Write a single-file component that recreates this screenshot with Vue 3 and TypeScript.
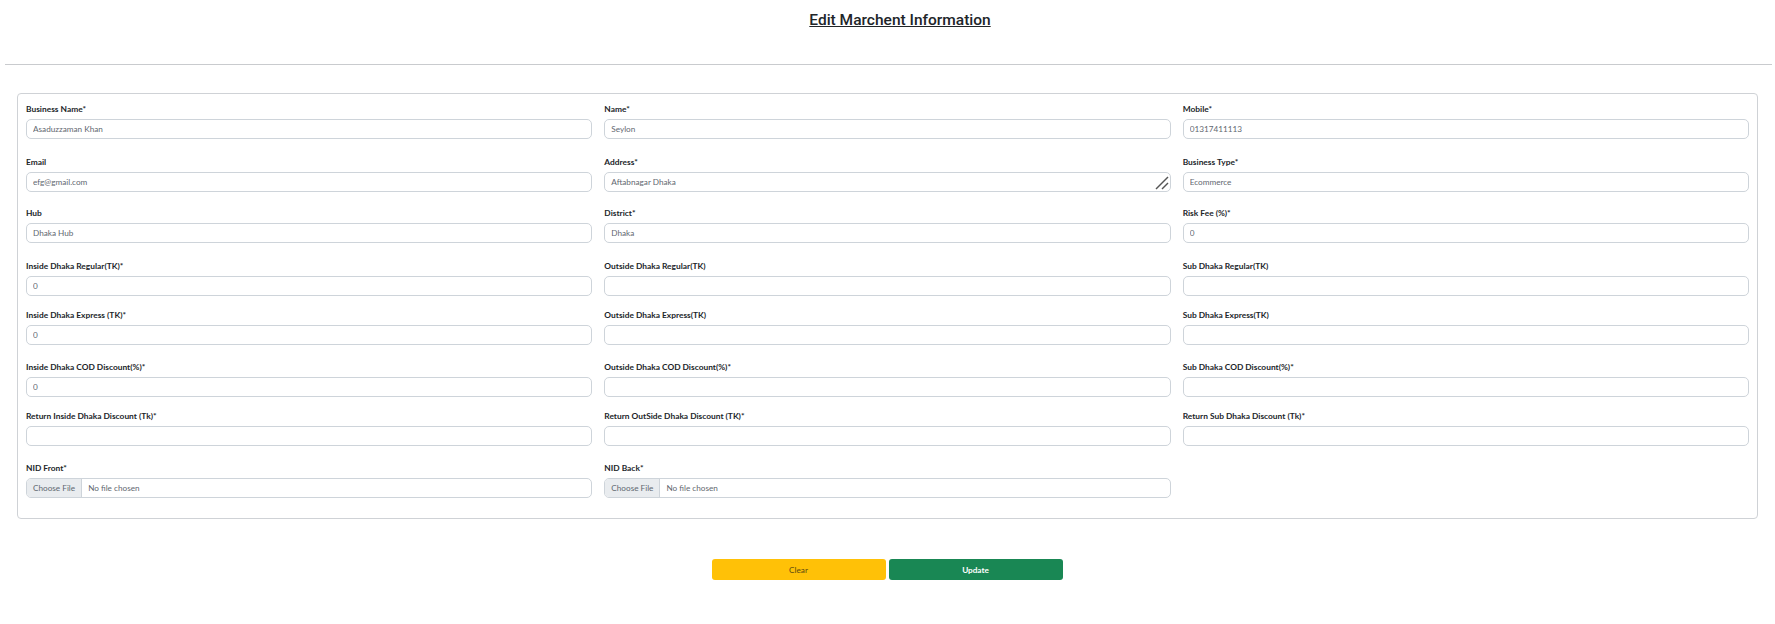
<script setup lang="ts">
interface Field {
  label: string;
  value?: string;
  type?: 'text' | 'textarea' | 'file';
}

const fields: Field[] = [
  { label: 'Business Name*', value: 'Asaduzzaman Khan' },
  { label: 'Name*', value: 'Seylon' },
  { label: 'Mobile*', value: '01317411113' },
  { label: 'Email', value: 'efg@gmail.com' },
  { label: 'Address*', value: 'Aftabnagar Dhaka', type: 'textarea' },
  { label: 'Business Type*', value: 'Ecommerce' },
  { label: 'Hub', value: 'Dhaka Hub' },
  { label: 'District*', value: 'Dhaka' },
  { label: 'Risk Fee (%)*', value: '0' },
  { label: 'Inside Dhaka Regular(TK)*', value: '0' },
  { label: 'Outside Dhaka Regular(TK)' },
  { label: 'Sub Dhaka Regular(TK)' },
  { label: 'Inside Dhaka Express (TK)*', value: '0' },
  { label: 'Outside Dhaka Express(TK)' },
  { label: 'Sub Dhaka Express(TK)' },
  { label: 'Inside Dhaka COD Discount(%)*', value: '0' },
  { label: 'Outside Dhaka COD Discount(%)*' },
  { label: 'Sub Dhaka COD Discount(%)*' },
  { label: 'Return Inside Dhaka Discount (Tk)*' },
  { label: 'Return OutSide Dhaka Discount (TK)*' },
  { label: 'Return Sub Dhaka Discount (Tk)*' },
  { label: 'NID Front*', type: 'file' },
  { label: 'NID Back*', type: 'file' },
];
</script>

<template>
  <main class="page">
    <h1 class="title">Edit Marchent Information</h1>
    <hr class="divider" />

    <form class="card" @submit.prevent>
      <div v-for="field in fields" :key="field.label" class="field">
        <label class="field__label">{{ field.label }}</label>

        <div v-if="field.type === 'file'" class="file">
          <span class="file__button">Choose File</span>
          <span class="file__name">No file chosen</span>
        </div>

        <div v-else-if="field.type === 'textarea'" class="area">
          <textarea class="control control--area" rows="1" readonly :value="field.value"></textarea>
          <svg class="area__grip" width="14" height="14" viewBox="0 0 14 14" aria-hidden="true">
            <path d="M1 13 L13 1" />
            <path d="M7 13 L13 7" />
          </svg>
        </div>

        <input v-else class="control" type="text" readonly :value="field.value ?? ''" />
      </div>
    </form>

    <div class="actions">
      <button class="btn btn--clear" type="button">Clear</button>
      <button class="btn btn--update" type="button">Update</button>
    </div>
  </main>
</template>

<style>
html,
body {
  margin: 0;
  background: #fff;
}
</style>

<style scoped>
.page {
  box-sizing: border-box;
  height: 624px;
  padding: 0 3px 0 5px;
  font-family: Lato, "Liberation Sans", sans-serif;
  color: #212529;
  background: #fff;
}

.title {
  margin: 0 0 0 23px;
  padding-top: 9px;
  height: 56px;
  box-sizing: border-box;
  text-align: center;
  font-family: Roboto, "Liberation Sans", sans-serif;
  font-size: 15.5px;
  line-height: 22px;
  font-weight: 500;
  text-decoration: underline;
}

.divider {
  margin: 0;
  border: 0;
  border-top: 1px solid #c9cbce;
  margin-top: 8px;
}

.card {
  box-sizing: border-box;
  display: grid;
  grid-template-columns: repeat(3, 1fr);
  grid-template-rows: 53px 51px 53px 49px 52px 49px 52px auto;
  column-gap: 12px;
  height: 426px;
  margin: 28px 14px 0 12px;
  padding: 9px 8px 0;
  border: 1px solid #cfd2d6;
  border-radius: 4px;
}

.field__label {
  display: block;
  height: 16px;
  font-size: 8.4px;
  line-height: 12px;
  font-weight: 700;
  color: #212529;
}

.control {
  display: block;
  box-sizing: border-box;
  width: 100%;
  height: 20px;
  padding: 0 6px;
  border: 1px solid #ced4da;
  border-radius: 5px;
  background: #fff;
  font-family: inherit;
  font-size: 8.2px;
  line-height: 18px;
  color: #5f6870;
  outline: none;
}

.control--area {
  resize: none;
  overflow: hidden;
}

.area {
  position: relative;
}

.area__grip {
  position: absolute;
  right: 2px;
  bottom: 2px;
  fill: none;
  stroke: #555;
  stroke-width: 1.4;
}

.file {
  display: flex;
  box-sizing: border-box;
  height: 20px;
  border: 1px solid #ced4da;
  border-radius: 5px;
  overflow: hidden;
  font-size: 8.2px;
  line-height: 18px;
  color: #5f6870;
}

.file__button {
  padding: 0 6px;
  background: #e9ecef;
  border-right: 1px solid #ced4da;
}

.file__name {
  padding: 0 6px;
}

.actions {
  display: flex;
  justify-content: center;
  gap: 3px;
  margin-top: 40px;
  margin-left: -3px;
}

.btn {
  width: 174px;
  height: 21px;
  padding: 0;
  border: 0;
  border-radius: 3px;
  font-family: inherit;
  font-size: 8.2px;
}

.btn--clear {
  background: #ffc107;
  color: #5c4a10;
}

.btn--update {
  background: #198754;
  color: #fff;
  font-weight: 700;
}
</style>
